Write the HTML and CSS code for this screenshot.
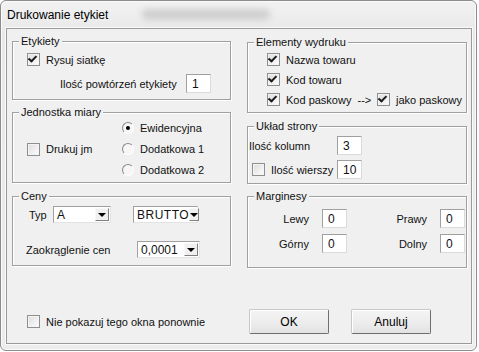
FILE: index.html
```html
<!DOCTYPE html>
<html lang="pl">
<head>
    <meta charset="UTF-8">
    <title>Drukowanie etykiet</title>
    <link rel="stylesheet" href="styles.css">
</head>
<body>

    <div class="window">
        <div class="titlebar">
            <span class="title">Drukowanie etykiet</span>
            <span class="glass-blur"></span>
        </div>

        <div class="client">
            <div class="columns">

                <div class="col">
                    <div class="group g-etykiety">
                        <span class="group-title">Etykiety</span>
                        <div class="row r-siatka">
                            <span class="chk checked"></span>
                            <span class="txt">Rysuj siatkę</span>
                        </div>
                        <div class="row r-powt">
                            <span class="lbl-powt">Ilość powtórzeń etykiety</span>
                            <span class="edit">1</span>
                        </div>
                    </div>

                    <div class="group g-jm">
                        <span class="group-title">Jednostka miary</span>
                        <div class="jm-body">
                            <div class="row r-drukuj">
                                <span class="chk"></span>
                                <span class="txt">Drukuj jm</span>
                            </div>
                            <div class="radios">
                                <div class="row"><span class="radio on"></span><span class="txt">Ewidencyjna</span></div>
                                <div class="row"><span class="radio"></span><span class="txt">Dodatkowa 1</span></div>
                                <div class="row"><span class="radio"></span><span class="txt">Dodatkowa 2</span></div>
                            </div>
                        </div>
                    </div>

                    <div class="group g-ceny">
                        <span class="group-title">Ceny</span>
                        <div class="row r-typ">
                            <span class="lbl-typ">Typ</span>
                            <span class="combo c-typ"><span class="val">A</span><span class="drop"></span></span>
                            <span class="combo c-brutto"><span class="val">BRUTTO</span><span class="drop"></span></span>
                        </div>
                        <div class="row r-zaokr">
                            <span class="lbl-zaokr">Zaokrąglenie cen</span>
                            <span class="combo c-zaokr"><span class="val">0,0001</span><span class="drop"></span></span>
                        </div>
                    </div>
                </div>

                <div class="col">
                    <div class="group g-elementy">
                        <span class="group-title">Elementy wydruku</span>
                        <div class="row"><span class="chk checked"></span><span class="txt">Nazwa towaru</span></div>
                        <div class="row"><span class="chk checked"></span><span class="txt">Kod towaru</span></div>
                        <div class="row">
                            <span class="kod-pask"><span class="chk checked"></span><span class="txt">Kod paskowy&nbsp; --&gt;</span></span>
                            <span class="chk checked"></span><span class="txt">jako paskowy</span>
                        </div>
                    </div>

                    <div class="group g-uklad">
                        <span class="group-title">Układ strony</span>
                        <div class="row r-kol">
                            <span class="lbl-kol">Ilość kolumn</span>
                            <span class="edit">3</span>
                        </div>
                        <div class="row r-wier">
                            <span class="wier"><span class="chk"></span><span class="txt">Ilość wierszy</span></span>
                            <span class="edit">10</span>
                        </div>
                    </div>

                    <div class="group g-margin">
                        <span class="group-title">Marginesy</span>
                        <div class="margin-grid">
                            <span class="m-lbl">Lewy</span><span class="edit">0</span>
                            <span class="m-lbl">Prawy</span><span class="edit">0</span>
                            <span class="m-lbl">Górny</span><span class="edit">0</span>
                            <span class="m-lbl">Dolny</span><span class="edit">0</span>
                        </div>
                    </div>
                </div>

            </div>

            <div class="footer">
                <div class="row r-nie">
                    <span class="chk"></span>
                    <span class="txt">Nie pokazuj tego okna ponownie</span>
                </div>
                <button class="btn">OK</button>
                <button class="btn">Anuluj</button>
            </div>
        </div>
    </div>

</body>
</html>
```

FILE: styles.css
```css
body {
    margin: 0;
    background-color: #ffffff;
    font-family: "Liberation Sans", Arial, sans-serif;
    font-size: 11px;
    color: #111;
}

.window {
    width: 475px;
    height: 349px;
    border: 1px solid #8c8c8c;
    border-radius: 6px;
    background: linear-gradient(#f2f2f2, #e9e9e9 30px, #ececec);
    box-shadow: inset 0 0 0 1px #fbfbfb;
}

.titlebar {
    height: 27px;
    display: flex;
    align-items: center;
    padding-left: 6px;
    gap: 34px;
}

.title {
    font-size: 12px;
    color: #000;
}

.glass-blur {
    width: 128px;
    height: 11px;
    background: #cfcfcf;
    border-radius: 5px;
    filter: blur(3px);
}

.client {
    width: 464px;
    height: 314px;
    margin-left: 5px;
    border: 1px solid #9a9a9a;
    background-color: #f0f0f0;
    display: flex;
    flex-direction: column;
    box-shadow: 0 0 0 1px #fafafa;
}

.columns {
    display: grid;
    grid-template-columns: 219px 220px;
    column-gap: 16px;
    padding-left: 5px;
}

.col {
    display: flex;
    flex-direction: column;
}

/* group boxes */

.group {
    box-sizing: border-box;
    border: 1px solid #a0a0a0;
    box-shadow: inset 1px 1px 0 #fff, 1px 1px 0 #fff;
}

.group-title {
    display: block;
    width: max-content;
    height: 13px;
    line-height: 13px;
    margin: -7px 0 0 6px;
    padding: 0 2px;
    background-color: #f0f0f0;
}

.g-etykiety { margin-top: 12px; height: 59px; }
.g-jm { margin-top: 12px; height: 71px; }
.g-ceny { margin-top: 13px; height: 70px; }

.g-elementy { margin-top: 13px; height: 71px; }
.g-uklad { margin-top: 13px; height: 58px; }
.g-margin { margin-top: 12px; height: 72px; }

.row {
    display: flex;
    align-items: center;
    height: 13px;
}

.txt {
    margin-left: 6px;
    white-space: nowrap;
}

/* checkbox and radio */

.chk {
    box-sizing: border-box;
    flex: none;
    width: 13px;
    height: 13px;
    border: 1px solid #8e8f8f;
    background: linear-gradient(135deg, #dcdcdc, #f4f4f4 70%, #fff);
    box-shadow: inset 0 0 0 1px #f4f4f4;
    position: relative;
}

.chk.checked::after {
    content: "";
    position: absolute;
    left: 2px;
    top: 0px;
    width: 3px;
    height: 6px;
    border-right: 2px solid #1c1c1c;
    border-bottom: 2px solid #1c1c1c;
    transform: rotate(40deg) skewX(-5deg);
}

.radio {
    box-sizing: border-box;
    flex: none;
    width: 12px;
    height: 12px;
    border-radius: 50%;
    border: 1px solid;
    border-color: #8a8a8a #ffffff #ffffff #8a8a8a;
    background: #f6f6f6;
    position: relative;
}

.radio.on::after {
    content: "";
    position: absolute;
    left: 3px;
    top: 3px;
    width: 4px;
    height: 4px;
    border-radius: 50%;
    background-color: #000;
}

/* edit fields and combos */

.edit {
    box-sizing: border-box;
    flex: none;
    width: 25px;
    height: 19px;
    padding: 3px 0 0 5px;
    background-color: #fff;
    border: 1px solid;
    border-color: #a0a0a0 #dadada #dadada #a0a0a0;
    line-height: 13px;
    font-size: 12px;
}

.combo {
    box-sizing: border-box;
    display: flex;
    align-items: center;
    height: 17px;
    background-color: #fff;
    border: 1px solid;
    border-color: #a0a0a0 #e3e3e3 #e3e3e3 #a0a0a0;
    font-size: 12px;
}

.combo .val {
    flex: 1;
    padding-left: 3px;
}

.combo .drop {
    width: 14px;
    height: 13px;
    margin-right: 1px;
    background-color: #f0f0f0;
    border: 1px solid;
    border-color: #f8f8f8 #808080 #808080 #f8f8f8;
    box-sizing: border-box;
    display: flex;
    align-items: center;
    justify-content: center;
}

.combo .drop::after {
    content: "";
    border-left: 4px solid transparent;
    border-right: 4px solid transparent;
    border-top: 4px solid #000;
    margin-top: 1px;
}

/* Etykiety */

.r-siatka { margin: 5px 0 0 14px; }

.r-powt {
    height: 19px;
    margin: 8px 0 0 47px;
}

.lbl-powt { width: 126px; white-space: nowrap; }

/* Jednostka miary */

.jm-body {
    display: flex;
    align-items: center;
    margin-top: 2px;
}

.r-drukuj { margin-left: 14px; width: 95px; }

.radios {
    display: flex;
    flex-direction: column;
    gap: 7px;
}

.radios .row { height: 14px; }

.radios .txt { margin-left: 6px; }

/* Ceny */

.r-typ { height: 17px; margin-top: 3px; }
.lbl-typ { margin-left: 16px; width: 24px; }
.c-typ { width: 58px; }
.c-brutto { width: 65px; margin-left: 22px; }
.c-brutto .val { letter-spacing: 0.5px; }

.r-zaokr { height: 17px; margin-top: 18px; }
.lbl-zaokr { margin-left: 13px; width: 111px; }
.c-zaokr { width: 63px; }

/* Elementy wydruku */

.g-elementy .row {
    margin: 7px 0 0 19px;
}

.g-elementy .row:first-of-type { margin-top: 4px; }

.kod-pask {
    display: flex;
    align-items: center;
    width: 110px;
}

/* Uklad strony */

.r-kol { height: 19px; margin: 3px 0 0 1px; }
.lbl-kol { width: 88px; }

.r-wier { height: 19px; margin: 5px 0 0 4px; }

.wier {
    display: flex;
    align-items: center;
    width: 85px;
}

/* Marginesy */

.margin-grid {
    display: grid;
    grid-template-columns: 61px 25px 67px 25px;
    column-gap: 13px;
    row-gap: 6px;
    align-items: center;
    margin-top: 6px;
}

.m-lbl { text-align: right; }

/* footer */

.footer {
    display: flex;
    align-items: center;
    margin-top: auto;
    padding: 0 0 9px 20px;
}

.r-nie { width: 222px; }

.btn {
    width: 80px;
    height: 25px;
    margin-right: 22px;
    font-family: "Liberation Sans", Arial, sans-serif;
    font-size: 12px;
    color: #000;
    background: linear-gradient(#f4f4f4, #ececec 60%, #e2e2e2);
    border: 1px solid;
    border-color: #c8c8c8 #6e6e6e #6e6e6e #c8c8c8;
    border-radius: 2px;
    box-shadow: inset 1px 1px 0 #fff;
    padding: 0;
}
```
